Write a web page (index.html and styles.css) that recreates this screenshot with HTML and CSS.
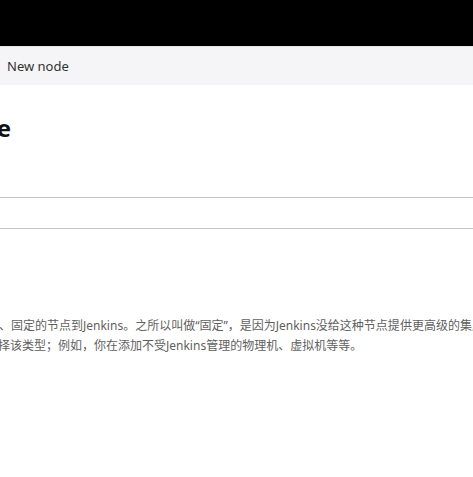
FILE: index.html
```html
<!DOCTYPE html>
<html lang="zh-CN">
<head>
<meta charset="utf-8">
<title>New node</title>
<link rel="stylesheet" href="styles.css">
</head>
<body>
<header class="topbar"></header>
<nav class="breadcrumbs"><span class="crumb">New node</span></nav>
<main class="main">
  <div class="title-clip"><h1 class="title">New node</h1></div>
  <div class="field"><input class="name-input" type="text" aria-label="节点名称"></div>
  <div class="desc">
    <div class="desc-line first">、固定的节点到Jenkins。之所以叫做“固定”，是因为Jenkins没给这种节点提供更高级的集成，比如动态配置。</div>
    <div class="desc-line second">择该类型；例如，你在添加不受Jenkins管理的物理机、虚拟机等等。</div>
  </div>
</main>
</body>
</html>
```
FILE: styles.css
```css
html, body {
  margin: 0;
  padding: 0;
  background: #ffffff;
  overflow: hidden;
}
body {
  font-family: "Noto Sans", "Noto Sans CJK SC", sans-serif;
  color: #333;
  width: 473px;
  height: 477px;
}
.topbar {
  height: 46px;
  background: #000;
  border-bottom: 1px solid #e8e8ea;
}
.breadcrumbs {
  height: 38px;
  background: #f5f5f7;
  display: flex;
  align-items: center;
  padding-left: 7px;
}
.crumb {
  font-size: 13px;
  color: #333;
  line-height: 16px;
}
.main {
  padding-top: 27px;
}
.title-clip {
  width: 11px;
  overflow: hidden;
  display: flex;
  justify-content: flex-end;
  white-space: nowrap;
}
.title {
  margin: 0;
  font-size: 24px;
  font-weight: 700;
  line-height: 32px;
  color: #111;
  flex: none;
}
.field {
  margin-top: 53px;
  margin-left: -20px;
  width: 520px;
}
.name-input {
  display: block;
  box-sizing: border-box;
  width: 100%;
  height: 32px;
  border: 1px solid #c4c4c4;
  background: #fff;
  margin: 0;
  padding: 0 8px;
}
.desc {
  margin-top: 87px;
  font-family: "Noto Sans", "Noto Sans CJK SC", sans-serif;
  font-size: 12px;
  line-height: 20px;
  color: #5f5f5f;
}
.desc-line {
  white-space: nowrap;
}
.desc-line.first {
  margin-left: -1px;
}
.desc-line.second {
  margin-left: -2px;
}
```
